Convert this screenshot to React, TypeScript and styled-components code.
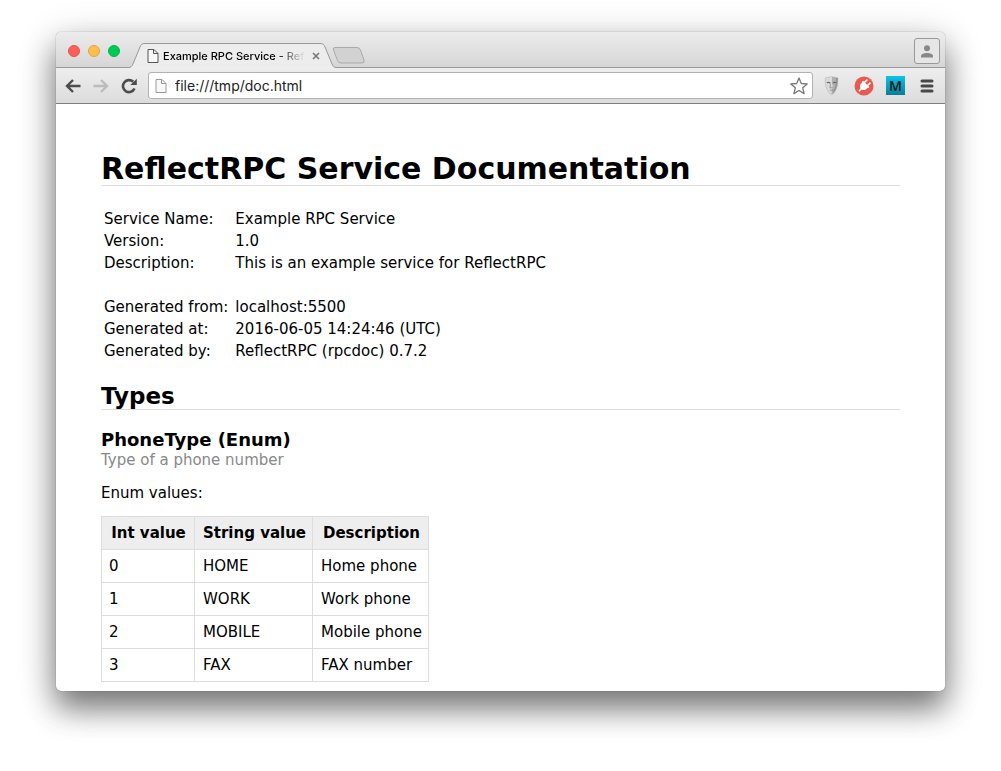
import React from "react";
import styled, { createGlobalStyle } from "styled-components";

const Global = createGlobalStyle`
  * { box-sizing: border-box; }
  body { margin: 0; background: #fff; color: #000; font-family: "DejaVu Sans", Verdana, sans-serif; }
`;

const Desktop = styled.div`
  padding: 32px 56px 80px;
`;
const BrowserWindow = styled.section`
  background: #fff;
  border-radius: 5px;
  box-shadow: 0 0 1px rgba(0, 0, 0, 0.6), 0 18px 30px rgba(0, 0, 0, 0.45), 0 8px 40px rgba(0, 0, 0, 0.2);
`;
const TitleBar = styled.header`
  display: flex;
  align-items: flex-end;
  height: 36px;
  border-radius: 5px 5px 0 0;
  border-bottom: 1px solid #999;
  background: linear-gradient(#ececec, #d6d6d6);
`;
const Lights = styled.div`
  display: flex;
  align-self: center;
  gap: 8px;
  padding: 3px 10px 0 12px;
`;
const Light = styled.button<{ $color: string; $edge: string }>`
  width: 12px;
  height: 12px;
  padding: 0;
  border: 1px solid ${(p) => p.$edge};
  border-radius: 50%;
  background: ${(p) => p.$color};
`;
const Tab = styled.div`
  position: relative;
  display: flex;
  align-items: center;
  width: 208px;
  height: 25px;
  margin-bottom: -1px;
  padding-left: 17px;
`;
const TabShape = styled.svg`
  position: absolute;
  inset: 0;
`;
const TabIcon = styled.svg`
  position: relative;
  flex: none;
`;
const TabTitle = styled.span`
  position: relative;
  width: 144px;
  margin-left: 4px;
  white-space: nowrap;
  font: 500 11px/16px Inter, sans-serif;
  mask-image: linear-gradient(to right, #000 112px, transparent 142px);
`;
const IconButton = styled.button`
  position: relative;
  display: flex;
  flex: none;
  padding: 0;
  border: 0;
  background: none;
`;
const TabClose = styled(IconButton)`
  margin-left: 5px;
`;
const NewTab = styled(IconButton)`
  margin-left: -6px;
  padding-bottom: 3px;
`;
const Profile = styled.button`
  display: flex;
  align-items: center;
  justify-content: center;
  width: 26px;
  height: 26px;
  margin: 0 5px 3px auto;
  padding: 0;
  border: 1px solid #999;
  border-radius: 3px;
  background: #e6e6e6;
`;
const Toolbar = styled.nav`
  display: flex;
  align-items: center;
  height: 36px;
  padding: 0 8px 0 9px;
  border-bottom: 1px solid #7f7f7f;
  background: linear-gradient(#eee, #dcdcdc);
`;
const Navigation = styled.div`
  display: flex;
  gap: 12px;
  margin-right: 11px;
`;
const AddressBar = styled.div`
  display: flex;
  flex: 1;
  align-items: center;
  height: 27px;
  padding: 0 4px 0 6px;
  border: 1px solid #b2b2b2;
  border-radius: 3px;
  background: #fff;
`;
const Address = styled.input`
  flex: 1;
  min-width: 0;
  margin-left: 8px;
  padding: 0;
  border: 0;
  outline: 0;
  background: none;
  color: #222;
  font: 14px/20px Inter, sans-serif;
`;
const Extensions = styled.div`
  display: flex;
  align-items: center;
  gap: 12px;
  margin-left: 9px;
`;
const Markdown = styled.button`
  width: 19px;
  height: 19px;
  padding: 0;
  border: 0;
  background: linear-gradient(#0cc4ee, #067f98);
  color: #222;
  font: 600 14px/19px "Noto Sans", sans-serif;
`;
const Page = styled.main`
  padding: 49px 45px 9px;
  font-size: 15px;
  line-height: 20px;
`;
const Title = styled.h1`
  margin: 0 0 21px;
  border-bottom: 1px solid #ddd;
  font-size: 30px;
  line-height: 32px;
`;
const Section = styled.h2`
  margin: 20px 0;
  border-bottom: 1px solid #ddd;
  font-size: 23px;
  line-height: 26px;
`;
const TypeName = styled.h3`
  margin: 0;
  font-size: 18px;
  line-height: 20px;
`;
const Note = styled.p`
  margin: 0;
  color: #888;
`;
const Label = styled.p`
  margin: 13px 0;
`;
const Info = styled.table`
  border-spacing: 2px;
  th, td { height: 20px; padding: 0 1px; text-align: left; font-weight: 400; white-space: nowrap; }
  th { padding-right: 4px; }
`;
const Values = styled.table`
  border-collapse: collapse;
  th, td { height: 33px; padding: 6px 6px 6px 8px; border: 1px solid #ddd; white-space: nowrap; }
  th { background: #eee; }
  th:first-child { min-width: 93px; }
  td:first-child, th:first-child { padding-left: 7px; }
`;

const info: [string, string][] = [
  ["Service Name:", "Example RPC Service"],
  ["Version:", "1.0"],
  ["Description:", "This is an example service for ReflectRPC"],
  ["", ""],
  ["Generated from:", "localhost:5500"],
  ["Generated at:", "2016-06-05 14:24:46 (UTC)"],
  ["Generated by:", "ReflectRPC (rpcdoc) 0.7.2"],
];
const values = [
  ["0", "HOME", "Home phone"],
  ["1", "WORK", "Work phone"],
  ["2", "MOBILE", "Mobile phone"],
  ["3", "FAX", "FAX number"],
];

const FileGlyph = ({ color }: { color: string }) => (
  <TabIcon width="12" height="16" viewBox="0 0 12 16" fill="#f8f8f8" stroke={color}>
    <path d="M1 1.500H7L11 5.500V14.500H1zM6.500 1.500V5.500H11" />
  </TabIcon>
);

export default function App() {
  return (
    <>
      <Global />
      <Desktop>
        <BrowserWindow>
          <TitleBar>
            <Lights>
              <Light aria-label="Close" $color="#ff5f57" $edge="#e9504a" />
              <Light aria-label="Minimize" $color="#ffbd4c" $edge="#e6a53c" />
              <Light aria-label="Zoom" $color="#00ca56" $edge="#00b44a" />
            </Lights>
            <Tab>
              <TabShape width="208" height="25" viewBox="0 0 208 25">
                <path d="M-2 24.5C1 24.5 2 23 3 21L10 4C11 1.500 12 .5 15 .5H190C193 .5 194 1.500 195 4L202 21C203 23.500 204 24.5 207 24.5V25H-2Z" fill="#ededed" />
                <path d="M-2 24.5C1 24.5 2 23 3 21L10 4C11 1.500 12 .5 15 .5H190C193 .5 194 1.500 195 4L202 21C203 23.500 204 24.5 207 24.5" fill="none" stroke="#999" />
              </TabShape>
              <FileGlyph color="#555" />
              <TabTitle>Example RPC Service - Refl</TabTitle>
              <TabClose aria-label="Close tab">
                <svg width="8" height="8" viewBox="0 0 8 8" stroke="#777" strokeWidth="1.6"><path d="M1 1l6 6M7 1L1 7" /></svg>
              </TabClose>
            </Tab>
            <NewTab aria-label="New tab">
              <svg width="34" height="17" viewBox="0 0 34 17" fill="#d2d2d2" stroke="#aaa">
                <path d="M3 .5H25Q27.500 .5 28.500 3L32 13Q33 16 30 16H9Q6.500 16 5.500 13.500L1.500 3Q.5 .5 3 .5Z" />
              </svg>
            </NewTab>
            <Profile aria-label="Profile">
              <svg width="12" height="13" viewBox="0 0 12 13" fill="#888"><circle cx="6" cy="3.300" r="3" /><path d="M0 12.500V11C0 9 3 8 6 8s6 1 6 3v1.500z" /></svg>
            </Profile>
          </TitleBar>
          <Toolbar>
            <Navigation>
              <IconButton aria-label="Back">
                <svg width="16" height="16" viewBox="0 0 16 16" fill="none" stroke="#4c4c4c" strokeWidth="2.400"><path d="M15.500 8H2.500M8 2L2 8l6 6" /></svg>
              </IconButton>
              <IconButton aria-label="Forward">
                <svg width="16" height="16" viewBox="0 0 16 16" fill="none" stroke="#bcbcbc" strokeWidth="2.400"><path d="M.5 8h13M8 2l6 6-6 6" /></svg>
              </IconButton>
              <IconButton aria-label="Reload">
                <svg width="16" height="16" viewBox="0 0 16 16" fill="none" stroke="#4c4c4c" strokeWidth="2.600"><path d="M13.500 10.500A6 6 0 1 1 12.200 3.800" /><path d="M15.800 .8V7H9.300z" fill="#4c4c4c" stroke="none" /></svg>
              </IconButton>
            </Navigation>
            <AddressBar>
              <FileGlyph color="#999" />
              <Address aria-label="Address" defaultValue="file:///tmp/doc.html" />
              <IconButton aria-label="Bookmark">
                <svg width="18" height="18" viewBox="0 0 18 18" fill="#fff" stroke="#777" strokeWidth="1.300" strokeLinejoin="round"><path d="M9 1l2.300 5.500 5.900.4-4.500 3.900 1.400 5.800L9 13.500l-5.100 3.100 1.400-5.800L.8 6.900l5.900-.4z" /></svg>
              </IconButton>
            </AddressBar>
            <Extensions>
              <IconButton aria-label="Mask extension">
                <svg width="20" height="19" viewBox="0 0 20 19">
                  <path d="M3.200 2Q9.500-.8 15.800 2Q16.500 10 13.500 14.500Q11.500 18.500 9.500 18.500Q7.500 18.500 5.500 14.500Q2.500 10 3.200 2Z" fill="#dadada" stroke="#b8b8b8" strokeWidth=".6" />
                  <path d="M10 1Q13 .8 15.800 2Q16.500 10 13.500 14.500Q11.500 18.500 9.500 18.500L10 13.500L11 12L10 7Z" fill="#b0b0b0" />
                  <path d="M14 2Q15 8 12 14L11 17.500Q15 14 15.800 2Z" fill="#8e8e8e" />
                  <path d="M4.800 6.800q2-1 3.400 .2M11 7q1.600-1.200 3.400-.2" stroke="#666" strokeWidth="1.200" fill="none" />
                  <path d="M8.500 7.500L8 11.800H11M7.800 14.200h3.600" stroke="#888" strokeWidth=".8" fill="none" />
                </svg>
              </IconButton>
              <IconButton aria-label="Plug extension">
                <svg width="20" height="20" viewBox="0 0 20 20">
                  <circle cx="10" cy="10" r="9.500" fill="#e65a4f" />
                  <g transform="rotate(45 10 10)" fill="#fff"><path d="M5.500 7h9v1.600h-.7v1.600a3.900 3.900 0 0 1-3 3.800v3.200H9.200V14a3.900 3.900 0 0 1-3-3.800V8.600h-.7zM7 3h1.600v4H7zM11.400 3H13v4h-1.600z" /></g>
                </svg>
              </IconButton>
              <Markdown aria-label="Markdown extension">M</Markdown>
              <IconButton aria-label="Menu">
                <svg width="20" height="14" viewBox="0 0 20 14" stroke="#484848" strokeWidth="3" strokeLinecap="round"><path d="M5 2h10M5 7h10M5 12h10" /></svg>
              </IconButton>
            </Extensions>
          </Toolbar>
          <Page>
            <Title>ReflectRPC Service Documentation</Title>
            <Info>
              <tbody>
                {info.map(([name, value], i) => (
                  <tr key={i}><th scope="row">{name}</th><td>{value}</td></tr>
                ))}
              </tbody>
            </Info>
            <Section>Types</Section>
            <TypeName>PhoneType (Enum)</TypeName>
            <Note>Type of a phone number</Note>
            <Label>Enum values:</Label>
            <Values>
              <thead>
                <tr><th>Int value</th><th>String value</th><th>Description</th></tr>
              </thead>
              <tbody>
                {values.map((row) => (
                  <tr key={row[0]}>{row.map((cell) => <td key={cell}>{cell}</td>)}</tr>
                ))}
              </tbody>
            </Values>
          </Page>
        </BrowserWindow>
      </Desktop>
    </>
  );
}
